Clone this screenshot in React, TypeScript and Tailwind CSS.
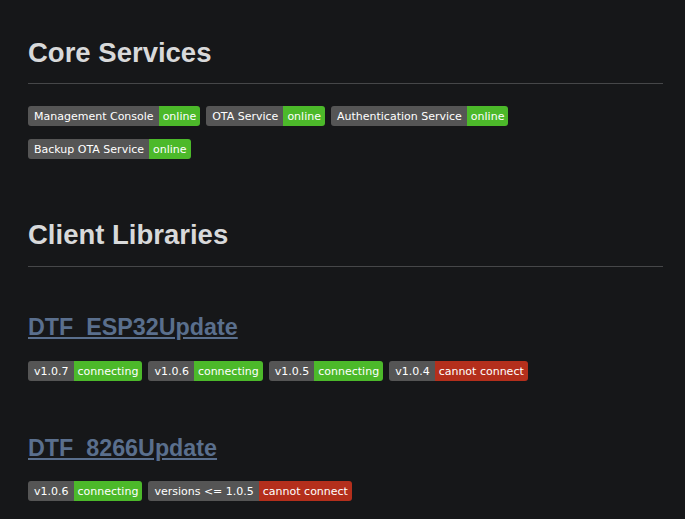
import React from "react";

type BadgeProps = { label: string; status: string; color: "green" | "red" };

function Badge({ label, status, color }: BadgeProps) {
  return (
    <span className="inline-flex h-5 items-stretch overflow-hidden rounded-[3px] text-[11px] leading-[21px] text-white font-['DejaVu_Sans',sans-serif]">
      <span className="bg-[#555555] pl-[6px] pr-[5px]">{label}</span>
      <span className={`pl-[4px] pr-[4px] ${color === "green" ? "bg-[#4cb92a]" : "bg-[#b42f1c]"}`}>{status}</span>
    </span>
  );
}

export default function App() {
  return (
    <div className="min-h-screen bg-[#161719] pl-7 pr-[22px] pt-[37px] text-[#d8d9da] font-['Liberation_Sans',Arial,sans-serif]">
      {/* Core services */}
      <h1 className="text-[27.5px] font-bold leading-8">Core Services</h1>
      <hr className="mt-[14px] border-t border-[#464749]" />
      <div className="mt-[22px] flex flex-wrap gap-x-[6px] gap-y-[13px]">
        <Badge label="Management Console" status="online" color="green" />
        <Badge label="OTA Service" status="online" color="green" />
        <Badge label="Authentication Service" status="online" color="green" />
        <Badge label="Backup OTA Service" status="online" color="green" />
      </div>

      {/* Client libraries */}
      <h1 className="mt-[60px] text-[27.5px] font-bold leading-8">Client Libraries</h1>
      <hr className="mt-[15px] border-t border-[#464749]" />

      <h2 className="mt-[46px] text-[23.3px] font-bold leading-7">
        <a href="#" className="text-[#5a6f8d] underline">DTF_ESP32Update</a>
      </h2>
      <div className="mt-[20px] flex flex-wrap gap-[6px]">
        <Badge label="v1.0.7" status="connecting" color="green" />
        <Badge label="v1.0.6" status="connecting" color="green" />
        <Badge label="v1.0.5" status="connecting" color="green" />
        <Badge label="v1.0.4" status="cannot connect" color="red" />
      </div>

      <h2 className="mt-[53px] text-[23.3px] font-bold leading-7">
        <a href="#" className="text-[#5a6f8d] underline">DTF_8266Update</a>
      </h2>
      <div className="mt-[19px] flex flex-wrap gap-[6px]">
        <Badge label="v1.0.6" status="connecting" color="green" />
        <Badge label="versions <= 1.0.5" status="cannot connect" color="red" />
      </div>
    </div>
  );
}
